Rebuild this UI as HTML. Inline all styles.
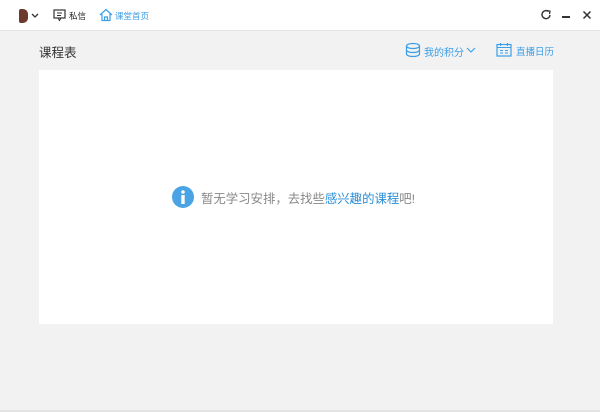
<!DOCTYPE html>
<html><head><meta charset="utf-8"><style>
*{margin:0;padding:0;box-sizing:border-box}
body{width:600px;height:412px;background:#f2f2f2;font-family:"Liberation Sans","Noto Sans CJK SC",sans-serif;position:relative;overflow:hidden}
.top{position:absolute;left:0;top:0;width:600px;height:31px;background:#fff;border-bottom:1px solid #e4e4e4}
.abs{position:absolute;white-space:nowrap}
.card{position:absolute;left:39px;top:70px;width:514px;height:254px;background:#fff}
</style></head><body>
<div class="top">
 <div class="abs" style="left:19px;top:9px;width:9px;height:14px;background:#6b3a2a;border-radius:2px 5px 5px 2px"></div>
 <svg class="abs" style="left:31px;top:13px" width="8" height="6"><path d="M1 1L4 4L7 1" stroke="#333" stroke-width="1.3" fill="none"/></svg>
 <svg class="abs" style="left:53px;top:9px" width="13" height="13"><rect x="1" y="1" width="11" height="8" fill="none" stroke="#333" stroke-width="1.2"/><path d="M4 4h5M4 6.5h4M5 9l1.5 2.5L8 9" stroke="#333" fill="none"/></svg>
 <div class="abs" style="left:69px;top:10px;font-size:8.5px;color:#222">私信</div>
 <svg class="abs" style="left:99px;top:8px" width="14" height="14"><path d="M1 7L7 1.5L13 7M3 6v6.5h8V6M5.5 12.5V9h3v3.5" stroke="#3a9ee8" stroke-width="1.2" fill="none"/></svg>
 <div class="abs" style="left:115px;top:10px;font-size:8.5px;color:#3a9ee8">课堂首页</div>
 <svg class="abs" style="left:540px;top:9px" width="12" height="12"><path d="M10 6A4 4 0 1 1 8.5 2.5" stroke="#333" stroke-width="1.4" fill="none"/><path d="M7 1.5L10 2.2L9.5 5" stroke="#333" stroke-width="1.3" fill="none"/></svg>
 <div class="abs" style="left:562px;top:16px;width:8px;height:2px;background:#333"></div>
 <svg class="abs" style="left:582px;top:10px" width="10" height="10"><path d="M1.5 1.5L8.5 8.5M8.5 1.5L1.5 8.5" stroke="#333" stroke-width="1.5"/></svg>
</div>
<div class="abs" style="left:39px;top:42px;font-size:12.5px;color:#333">课程表</div>
<svg class="abs" style="left:405px;top:42px" width="16" height="16"><ellipse cx="8" cy="4" rx="6.5" ry="2.5" fill="none" stroke="#3a9ee8" stroke-width="1.2"/><path d="M1.5 4v8c0 1.4 2.9 2.5 6.5 2.5s6.5-1.1 6.5-2.5V4M1.5 8c0 1.4 2.9 2.5 6.5 2.5s6.5-1.1 6.5-2.5" fill="none" stroke="#3a9ee8" stroke-width="1.2"/></svg>
<div class="abs" style="left:424px;top:44px;font-size:10px;color:#3a9ee8">我的积分</div>
<svg class="abs" style="left:466px;top:47px" width="10" height="7"><path d="M1 1L5 5L9 1" stroke="#3a9ee8" stroke-width="1.1" fill="none"/></svg>
<svg class="abs" style="left:496px;top:42px" width="16" height="15"><rect x="1" y="2.5" width="14" height="11.5" fill="none" stroke="#3a9ee8" stroke-width="1.2"/><path d="M1 5.5h14M4.5 1v3M11.5 1v3M4 8.5h3M9 8.5h3M4 11h3M9 11h3" stroke="#3a9ee8" stroke-width="1.1"/></svg>
<div class="abs" style="left:516px;top:44px;font-size:9.5px;color:#3a9ee8">直播日历</div>
<div class="card"></div>
<svg class="abs" style="left:172px;top:186px" width="22" height="22"><circle cx="11" cy="11" r="11" fill="#4aa3e4"/><circle cx="11" cy="6" r="1.8" fill="#fff"/><rect x="9.3" y="9" width="3.4" height="9" fill="#fff"/></svg>
<div class="abs" style="left:201px;top:189px;font-size:12.4px;color:#888">暂无学习安排，去找些<span style="color:#2b8fd8">感兴趣的课程</span>吧!</div>
<div class="abs" style="left:0;top:410px;width:600px;height:2px;background:#e4e4e4"></div>
</body></html>
